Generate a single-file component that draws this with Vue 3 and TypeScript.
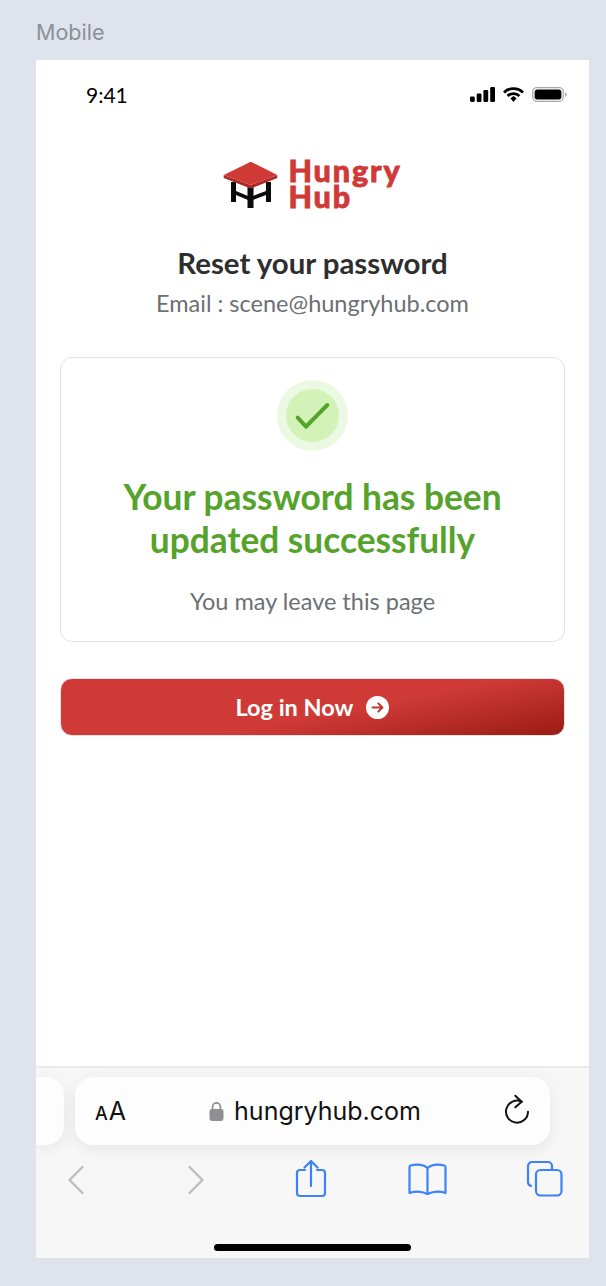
<script setup lang="ts">
const navStroke = '#3d82f6';
</script>

<template>
  <div class="page">
    <div class="label">Mobile</div>
    <div class="phone">
      <div class="status">
        <span class="time">9:41</span>
        <div class="status-icons">
          <svg width="25" height="15" viewBox="0 0 25 15">
            <rect x="0" y="9.5" width="4.8" height="5.5" rx="1.4" />
            <rect x="6.7" y="6.5" width="4.8" height="8.5" rx="1.2" />
            <rect x="13.4" y="3" width="4.8" height="12" rx="1.2" />
            <rect x="20.2" y="0" width="4.8" height="15" rx="1.2" />
          </svg>
          <svg width="21" height="15" viewBox="0 0 21 15" fill="none" stroke="#000" stroke-width="2.8">
            <path d="M1 5.4C6.3 0.4 14.7 0.4 20 5.4" />
            <path d="M4.6 8.9C7.8 5.9 13.2 5.9 16.4 8.9" />
            <path d="M7.4 11.3L10.5 9L13.6 11.3L10.5 15Z" fill="#000" stroke="none" />
          </svg>
          <svg width="35" height="15" viewBox="0 0 35 15">
            <rect x="0.7" y="0.7" width="30.6" height="13.6" rx="4.2" fill="none" stroke="#a9a9a9" stroke-width="1.3" />
            <rect x="2.6" y="2.6" width="26.8" height="9.8" rx="2.6" />
            <path d="M33 5.2C34.2 5.6 35 6.5 35 7.5S34.2 9.4 33 9.8Z" fill="#b5b5b5" />
          </svg>
        </div>
      </div>

      <main class="content">
        <div class="logo">
          <svg width="56" height="50" viewBox="0 0 56 50">
            <path d="M8 22H13V42H8ZM43 22H48V42H43Z" fill="#0b0b0b" />
            <path d="M24.5 27H30.5V48H24.5Z" fill="#0b0b0b" />
            <path d="M13 31L25 36V40L13 35ZM30 36L43 31V35L30 40Z" fill="#0b0b0b" />
            <path d="M0.7 15V18L27.7 28.5L54.3 18V15L27.7 25Z" fill="#a92a26" />
            <path d="M0.7 15L27.7 1.7L54.3 15L27.7 25Z" fill="#cf3a37" />
          </svg>
          <div class="logo-text">Hungry<br />Hub</div>
        </div>

        <h1 class="heading">Reset your password</h1>
        <p class="email">Email : scene@hungryhub.com</p>

        <section class="card">
          <div class="check-outer">
            <div class="check-inner">
              <svg width="53" height="53" viewBox="0 0 53 53" fill="none" stroke="#55a32a" stroke-width="4" stroke-linecap="round" stroke-linejoin="round">
                <path d="M11.7 28.7L20 37.7L41.3 16" />
              </svg>
            </div>
          </div>
          <h2 class="success">Your password has been<br />updated successfully</h2>
          <p class="leave">You may leave this page</p>
        </section>

        <button class="login" type="button">
          <span>Log in Now</span>
          <svg width="23" height="23" viewBox="0 0 23 23">
            <circle cx="11.5" cy="11.5" r="11.5" fill="#fff" />
            <path d="M6.5 11.5H16M12.3 7.4L16.4 11.5L12.3 15.6" fill="none" stroke="#c4322e" stroke-width="2" stroke-linecap="round" stroke-linejoin="round" />
          </svg>
        </button>
      </main>

      <footer class="browser">
        <div class="address-row">
          <div class="tab-stub"></div>
          <div class="address">
            <span class="aa"><small>A</small>A</span>
            <span class="domain">
              <svg width="15" height="20" viewBox="0 0 15 20">
                <path d="M3.6 9V5.8a3.9 3.9 0 0 1 7.8 0V9" fill="none" stroke="#8e8e93" stroke-width="1.7" />
                <rect x="0.5" y="8" width="14" height="12" rx="2.4" fill="#8e8e93" />
              </svg>
              hungryhub.com
            </span>
            <svg width="26" height="34" viewBox="0 0 26 34" fill="none" stroke="#111" stroke-width="2" stroke-linecap="round" stroke-linejoin="round">
              <path d="M17.7 7.7A11 11 0 1 0 24 17.7" />
              <path d="M11.3 1.7L17.7 7.7L11.3 13.3" />
            </svg>
          </div>
        </div>

        <nav class="nav">
          <svg width="40" height="40" viewBox="0 0 40 40" fill="none" stroke="#bdbdbd" stroke-width="2.4" stroke-linecap="round" stroke-linejoin="round">
            <path d="M26.5 7L13.5 20L26.5 33" />
          </svg>
          <svg width="40" height="40" viewBox="0 0 40 40" fill="none" stroke="#bdbdbd" stroke-width="2.4" stroke-linecap="round" stroke-linejoin="round">
            <path d="M16.5 7L29.5 20L16.5 33" />
          </svg>
          <svg width="40" height="40" viewBox="0 0 40 40" fill="none" :stroke="navStroke" stroke-width="2.2" stroke-linecap="round" stroke-linejoin="round">
            <path d="M15 10H10a3 3 0 0 0-3 3V33a3 3 0 0 0 3 3H32a3 3 0 0 0 3-3V13a3 3 0 0 0-3-3H27" />
            <path d="M21 26V1.5M14.5 7.5L21 1L27.5 7.5" />
          </svg>
          <svg width="40" height="40" viewBox="0 0 40 40" fill="none" :stroke="navStroke" stroke-width="2.2" stroke-linecap="round" stroke-linejoin="round">
            <path d="M20.5 8C16.5 4.5 9.5 4 3.5 5.5C2.5 6 2.5 6.5 2.5 7.5V33C8.5 31 15.5 31.5 20.5 34C25.5 31.5 32.5 31 38.5 33V7.5C38.5 6.5 38.5 6 37.5 5.5C31.5 4 24.5 4.5 20.5 8Z" />
            <path d="M20.5 8V34" />
          </svg>
          <svg width="40" height="40" viewBox="0 0 40 40" fill="none" :stroke="navStroke" stroke-width="2.2" stroke-linejoin="round">
            <path d="M8 26H7.5A4 4 0 0 1 4 22V6A4 4 0 0 1 8 2H24A4 4 0 0 1 28 6V9" />
            <rect x="12" y="10" width="25.5" height="25.5" rx="4.5" />
          </svg>
        </nav>

        <div class="home"></div>
      </footer>
    </div>
  </div>
</template>

<style>
html,
body {
  margin: 0;
  background: #dfe3eb;
}
</style>

<style scoped>
.page {
  width: 606px;
  height: 1286px;
  background: #dfe3eb;
  box-sizing: border-box;
  padding: 0 17px 0 36px;
  font-family: Lato, 'Noto Sans', sans-serif;
  overflow: hidden;
}

.label {
  height: 60px;
  line-height: 65px;
  color: #8b9097;
  font-family: Inter, sans-serif;
  font-size: 21.5px;
}

.phone {
  height: 1198px;
  background: #fff;
  display: flex;
  flex-direction: column;
}

.status {
  height: 70px;
  flex: none;
  display: flex;
  align-items: center;
  justify-content: space-between;
  padding: 0 22px 2px 50px;
  box-sizing: border-box;
}

.time {
  font-size: 21px;
  color: #000;
}

.status-icons {
  display: flex;
  align-items: center;
  gap: 8px;
}

.status-icons svg {
  display: block;
}

.content {
  flex: 1;
  display: flex;
  flex-direction: column;
  align-items: stretch;
  padding: 30px 24px 0;
}

.logo {
  display: flex;
  justify-content: center;
  gap: 9px;
  height: 52px;
}

.logo-text {
  margin-top: -3px;
  font-family: Lato, sans-serif;
  font-weight: 900;
  font-size: 30.5px;
  line-height: 26px;
  color: #cf3a37;
  letter-spacing: 1.9px;
  -webkit-text-stroke: 0.8px #cf3a37;
}

.heading {
  margin: 33px 0 0;
  text-align: center;
  font-size: 29.4px;
  line-height: 36px;
  font-weight: 700;
  color: #2e2e2e;
}

.email {
  margin: 6px 0 0;
  text-align: center;
  font-size: 23.5px;
  line-height: 32px;
  color: #6c6f73;
}

.card {
  margin-top: 38px;
  height: 285px;
  box-sizing: border-box;
  border: 1.5px solid #e2e2e2;
  border-radius: 12px;
  padding-top: 22px;
  display: flex;
  flex-direction: column;
  align-items: center;
}

.check-outer {
  width: 71px;
  height: 71px;
  border-radius: 50%;
  background: #ecf9e2;
  display: flex;
  align-items: center;
  justify-content: center;
}

.check-inner {
  width: 53px;
  height: 53px;
  border-radius: 50%;
  background: #d3f2b8;
}

.check-inner svg {
  display: block;
}

.success {
  margin: 24px 0 0;
  text-align: center;
  font-size: 35.3px;
  line-height: 43px;
  font-weight: 700;
  color: #55a32a;
}

.leave {
  margin: 26px 0 0;
  font-size: 23.5px;
  line-height: 28px;
  color: #6c6f73;
}

.login {
  margin-top: 36px;
  height: 58px;
  border: 1px solid #e2e2e2;
  border-radius: 12px;
  background: linear-gradient(169deg, #cf3a37 56%, #9a1c13 100%);
  color: #fff;
  font-family: Lato, sans-serif;
  font-size: 23.5px;
  font-weight: 700;
  display: flex;
  align-items: center;
  justify-content: center;
  gap: 13px;
  padding: 0;
}

.browser {
  height: 192px;
  flex: none;
  box-sizing: border-box;
  background: #f7f7f8;
  border-top: 2px solid #ebebeb;
  overflow: hidden;
}

.address-row {
  margin-top: 9px;
  display: flex;
  gap: 11px;
}

.tab-stub {
  width: 28px;
  height: 68px;
  flex: none;
  background: #fdfdfd;
  border-radius: 0 18px 18px 0;
  box-shadow: 0 4px 18px rgba(0, 0, 0, 0.07);
}

.address {
  width: 475px;
  height: 68px;
  flex: none;
  box-sizing: border-box;
  padding: 0 20px;
  background: #fdfdfd;
  border-radius: 18px;
  box-shadow: 0 4px 18px rgba(0, 0, 0, 0.07);
  display: flex;
  align-items: center;
  justify-content: space-between;
}

.aa {
  font-family: Inter, sans-serif;
  font-size: 25px;
  color: #111;
}

.aa small {
  font-size: 18px;
  font-weight: 500;
  margin-right: 1px;
}

.domain {
  font-family: Inter, sans-serif;
  font-size: 25px;
  color: #111;
  display: flex;
  align-items: center;
  gap: 10px;
}

.nav {
  margin-top: 15px;
  padding: 0 25px 0 20px;
  display: flex;
  justify-content: space-between;
}

.home {
  width: 197px;
  height: 7px;
  margin: 44px auto 0;
  border-radius: 4px;
  background: #000;
}
</style>
